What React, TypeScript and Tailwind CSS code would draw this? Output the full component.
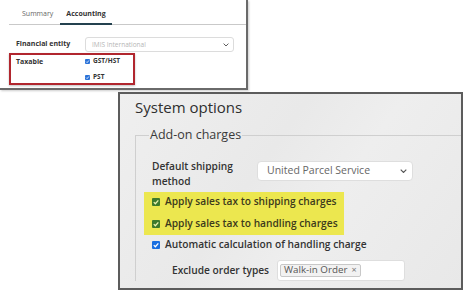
import React from "react";

const font = { fontFamily: '"Open Sans", "Liberation Sans", sans-serif' };

function Check({ tone }: { tone: "blue" | "green" | "small" }) {
  const box =
    tone === "green"
      ? "w-[8px] h-[8px] bg-[#3e7a2c]"
      : tone === "blue"
      ? "w-[8px] h-[8px] bg-[#1a6fe0]"
      : "w-[5px] h-[5px] bg-[#2a72d8]";
  const stroke = tone === "green" ? "#eef3b0" : "#ffffff";
  return (
    <span className={`inline-flex items-center justify-center rounded-[1px] shrink-0 ${box}`}>
      <svg viewBox="0 0 10 10" className="w-full h-full">
        <path d="M2.2 5.2 L4.2 7.2 L7.9 2.9" fill="none" stroke={stroke} strokeWidth="1.6" />
      </svg>
    </span>
  );
}

function Chevron({ size }: { size: number }) {
  return (
    <svg viewBox="0 0 10 6" width={size} height={size * 0.6}>
      <path d="M1 1 L5 5 L9 1" fill="none" stroke="#555" strokeWidth="1.6" />
    </svg>
  );
}

function AccountingPanel() {
  return (
    <div className="w-[248px] h-[90px] bg-white border-r-2 border-b-2 border-[#6a6a6a] shadow-[1px_1px_2px_rgba(0,0,0,0.2)]">
      <div className="ml-[9px] h-[25px] flex items-end border-b border-[#c9c9c9] text-[7px]">
        <div className="pl-[13px] pr-[7px] pb-[5px] text-[#666]">Summary</div>
        <div className="px-[6px] pb-[4px] font-bold text-[#333] border-b-2 border-[#24414f] -mb-px">Accounting</div>
      </div>
      <div className="mt-[12px] flex items-center">
        <div className="pl-[16px] w-[85px] text-[7px] font-bold text-[#333]">Financial entity</div>
        <div className="w-[149px] h-[15px] rounded-[3px] border border-[#dcdcdc] flex items-center justify-between pl-[6px] pr-[4px]">
          <span className="text-[6.5px] text-[#b5b5b5]">IMIS International</span>
          <Chevron size={6} />
        </div>
      </div>
      <div className="ml-[9px] mt-[1px] w-[126px] h-[32px] border-2 border-[#b1262e] shadow-[0_1px_2px_rgba(0,0,0,0.25)] flex">
        <div className="pl-[5px] w-[74px] pt-[2px] leading-[10px] text-[7px] font-bold text-[#333]">Taxable</div>
        <div className="pt-[1px] flex flex-col gap-[6px]">
          <div className="h-[10px] flex items-center gap-[3px] text-[6.5px] font-bold text-[#333]">
            <Check tone="small" />
            GST/HST
          </div>
          <div className="h-[10px] flex items-center gap-[3px] text-[6.5px] font-bold text-[#333]">
            <Check tone="small" />
            PST
          </div>
        </div>
      </div>
    </div>
  );
}

function SystemOptionsPanel() {
  return (
    <div className="ml-[118px] mt-[2px] w-[345px] h-[198px] border-2 border-[#5c5c5c] bg-[#ececec] bg-[linear-gradient(125deg,#efefef_0%,#e9e9e9_40%,#eeeeee_60%,#e8e8e8_100%)] overflow-hidden">
      <div className="pl-[15px] pt-[3px] leading-[20px] text-[15px] text-[#2f2f2f]">System options</div>
      <fieldset className="ml-[15px] mt-[10px] w-[420px] border-l border-t border-[#cfcfcf] pl-[8px]">
        <legend className="ml-[5px] px-[1px] text-[12.5px] leading-[16px] text-[#3a3a3a]">Add-on charges</legend>
        <div className="mt-[16px] flex items-start">
          <div className="pl-[8px] w-[113px] text-[10.2px] leading-[15px] font-semibold text-[#333]">
            Default shipping
            <br />
            method
          </div>
          <div className="mt-[2px] w-[156px] h-[20px] rounded-[4px] border border-[#dedede] bg-white flex items-center justify-between pl-[9px] pr-[5px]">
            <span className="text-[10.5px] text-[#666]">United Parcel Service</span>
            <Chevron size={7} />
          </div>
        </div>
        <div className="mt-[2.5px] w-[200px] bg-[#ece74f] pt-[3px] pb-[3px] pl-[8px] flex flex-col gap-[7px]">
          <div className="h-[15px] flex items-center gap-[5px] text-[10.2px] font-semibold text-[#3c3a1c]">
            <Check tone="green" />
            Apply sales tax to shipping charges
          </div>
          <div className="h-[15px] flex items-center gap-[5px] text-[10.2px] font-semibold text-[#3c3a1c]">
            <Check tone="green" />
            Apply sales tax to handling charges
          </div>
        </div>
        <div className="mt-[2.5px] pl-[8px] h-[15px] flex items-center gap-[5px] text-[10.2px] font-semibold text-[#333]">
          <Check tone="blue" />
          Automatic calculation of handling charge
        </div>
        <div className="mt-[7.5px] flex items-start">
          <div className="pl-[28px] w-[133px] pt-[3px] leading-[15px] text-[10.2px] font-semibold text-[#333]">
            Exclude order types
          </div>
          <div className="w-[128px] h-[21px] rounded-[3px] border border-[#dedede] bg-white flex items-center pl-[2px]">
            <span className="h-[13px] px-[3px] rounded-[2px] border border-[#c8c8c8] bg-[#f2f2f2] flex items-center gap-[4px] text-[9.8px] text-[#555]">
              Walk-in Order
              <span className="text-[9px] text-[#777]">×</span>
            </span>
          </div>
        </div>
      </fieldset>
    </div>
  );
}

export default function App() {
  return (
    <div className="w-[463px] h-[290px] bg-white overflow-hidden" style={font}>
      <AccountingPanel />
      <SystemOptionsPanel />
    </div>
  );
}
